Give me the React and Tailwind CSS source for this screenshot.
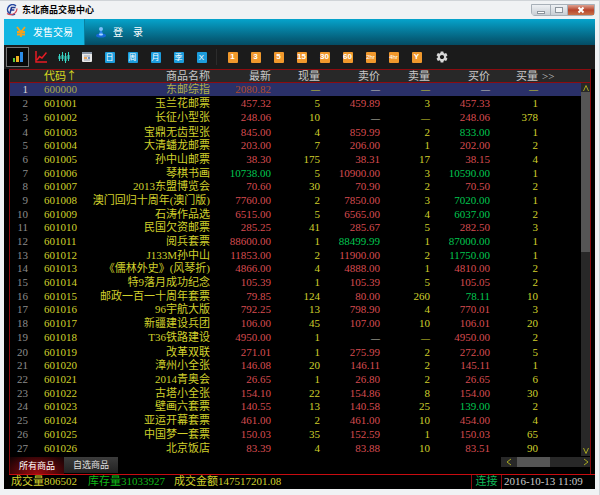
import { clsx } from 'clsx';
import { MdSettings } from 'react-icons/md';

const rows = [
  ['600000', '东邮综指', '2080.82', '—', '—', '—', '—', '—'],
  ['601001', '玉兰花邮票', '457.32', '5', '459.89', '3', '457.33', '1'],
  ['601002', '长征小型张', '248.06', '10', '—', '—', '248.06', '378'],
  ['601003', '宝鼎无齿型张', '845.00', '4', '859.99', '2', '833.00', '1'],
  ['601004', '大清蟠龙邮票', '203.00', '7', '206.00', '1', '202.00', '2'],
  ['601005', '孙中山邮票', '38.30', '175', '38.31', '17', '38.15', '4'],
  ['601006', '琴棋书画', '10738.00', '5', '10900.00', '3', '10590.00', '1'],
  ['601007', '2013东盟博览会', '70.60', '30', '70.90', '2', '70.50', '2'],
  ['601008', '澳门回归十周年(澳门版)', '7760.00', '2', '7850.00', '3', '7020.00', '1'],
  ['601009', '石涛作品选', '6515.00', '5', '6565.00', '4', '6037.00', '2'],
  ['601010', '民国欠资邮票', '285.25', '41', '285.67', '5', '282.50', '3'],
  ['601011', '阅兵套票', '88600.00', '1', '88499.99', '1', '87000.00', '1'],
  ['601012', 'J133M孙中山', '11853.00', '2', '11900.00', '2', '11750.00', '1'],
  ['601013', '《儒林外史》(风琴折)', '4866.00', '4', '4888.00', '1', '4810.00', '2'],
  ['601014', '特9落月成功纪念', '105.39', '1', '105.39', '5', '105.05', '2'],
  ['601015', '邮政一百一十周年套票', '79.85', '124', '80.00', '260', '78.11', '10'],
  ['601016', '96宇航大版', '792.25', '13', '798.90', '4', '770.01', '3'],
  ['601017', '新疆建设兵团', '106.00', '45', '107.00', '10', '106.01', '20'],
  ['601018', 'T36铁路建设', '4950.00', '1', '—', '—', '4950.00', '2'],
  ['601019', '改革双联', '271.01', '1', '275.99', '2', '272.00', '5'],
  ['601020', '漳州小全张', '146.08', '20', '146.11', '2', '145.11', '1'],
  ['601021', '2014青奥会', '26.65', '1', '26.80', '2', '26.65', '6'],
  ['601022', '古塔小全张', '154.10', '22', '154.86', '8', '154.00', '30'],
  ['601023', '壁画六套票', '140.55', '13', '140.58', '25', '139.00', '2'],
  ['601024', '亚运开幕套票', '461.00', '2', '461.00', '10', '454.00', '4'],
  ['601025', '中国梦一套票', '150.03', '35', '152.59', '1', '150.03', '65'],
  ['601026', '北京饭店', '83.39', '4', '83.88', '10', '83.51', '90'],
];

// prices below the previous close are shown in green
const falling = ['10738.00', '833.00', '10590.00', '7020.00', '6037.00', '88499.99', '87000.00', '11750.00', '78.11', '139.00'];

const periods = ['日', '周', '月', '季', 'X'];
const minutes = ['1', '3', '5', '15', '30', '60', '2hr', '4hr', 'Y'];

const priceColor = (value, first) => {
  if (value === '—') return 'text-[#c8c8b8]';
  if (first) return 'text-[#b04c2c]';
  return falling.includes(value) ? 'text-[#00c850]' : 'text-[#d84c50]';
};

const Logo = () => (
  <svg viewBox="0 0 12 12" className="h-3 w-3" aria-hidden="true">
    <path d="M10 2A5 5 0 1 0 9 10" fill="none" stroke="#2446a0" strokeWidth="1.5" />
    <path d="M1 9.5C5 12 10.500 10 11 4.500" fill="none" stroke="#d04858" strokeWidth="1.200" />
    <path d="M4 9 5.500 3.500H9.500M4.800 6H8.300" fill="none" stroke="#203a90" strokeWidth="1.600" />
  </svg>
);

const YenIcon = () => (
  <svg viewBox="0 0 12 12" className="h-3 w-3" aria-hidden="true">
    <path d="M2 1 6 6 10 1M2 6H10M2 8.500H10M6 6V11" fill="none" stroke="#f5a21c" strokeWidth="1.800" />
  </svg>
);

const UserIcon = () => (
  <svg viewBox="0 0 12 12" className="h-3 w-3" aria-hidden="true">
    <ellipse cx="6" cy="9.500" rx="5" ry="2" fill="#1668d8" />
    <path d="M6 3 3.500 9Q6 10.500 8.500 9Z" fill="#2c86f0" />
    <circle cx="6" cy="3" r="2" fill="#7cc0fa" />
    <ellipse cx="6" cy="8.500" rx="2" ry="1" fill="#a8d8ff" />
  </svg>
);

const BarsIcon = () => (
  <svg viewBox="0 0 12 12" className="h-3 w-3 shrink-0" aria-hidden="true">
    <rect x="1" y="7" width="2" height="4" fill="#58c838" />
    <rect x="4" y="5" width="3" height="6" fill="#f0b020" />
    <rect x="8" y="1" width="3" height="10" fill="#2c8ce8" />
  </svg>
);

const LineIcon = () => (
  <svg viewBox="0 0 12 12" className="h-3 w-3 shrink-0" aria-hidden="true">
    <path d="M1 0V11H12M2 9 4.500 5.500 7 7 11.500 1.500" fill="none" stroke="#e81c24" strokeWidth="1.500" />
  </svg>
);

const CandlesIcon = () => (
  <svg viewBox="0 0 12 12" className="h-3 w-3 shrink-0" aria-hidden="true">
    <path d="M1.500 3V10M4.500 1V10M7.500 2V12M10.500 1V10" stroke="#38d8c8" strokeWidth="1" />
    <path d="M1.500 5V8M4.500 4V8M7.500 5V10M10.500 4V8" stroke="#38d8c8" strokeWidth="2" />
  </svg>
);

const CalendarIcon = () => (
  <svg viewBox="0 0 12 12" className="h-3 w-3 shrink-0" aria-hidden="true">
    <rect x="1" y="1" width="10" height="10" rx="1" fill="#e8e8e8" />
    <rect x="1" y="1" width="10" height="2" fill="#8c98a8" />
    <path d="M3 5H9M3 9H9" stroke="#98a0b0" />
    <path d="M3 7H6" stroke="#e89030" strokeWidth="1.500" />
    <path d="M7 7H9" stroke="#4878b8" strokeWidth="1.500" />
  </svg>
);

const ToolButton = ({ label, active, children }) => (
  <button
    aria-label={label}
    className={clsx(
      'flex h-5 w-[23px] shrink-0 items-center justify-center border',
      active ? 'border-[#777777] bg-[#080808]' : 'border-transparent'
    )}
  >
    {children}
  </button>
);

const TitleBar = () => (
  <header className="flex h-[18px] shrink-0 items-start justify-between">
    <h1 className="flex items-center gap-1 pt-0.5 pl-0.5 text-[9px] leading-[14px] font-bold text-black">
      <Logo />
      东北商品交易中心
    </h1>
    <div className="mt-[3px] flex h-3 rounded-b-sm border border-[#a8b0b8] bg-[#a8b0b8]">
      <button aria-label="最小化" className="flex w-[18px] items-center justify-center bg-linear-to-b from-[#eef1f4] to-[#c8ced4]">
        <span className="mt-1 h-[3px] w-2 border border-[#8c949c] bg-white" />
      </button>
      <button aria-label="最大化" className="ml-px flex w-4 items-center justify-center bg-linear-to-b from-[#eef1f4] to-[#c8ced4]">
        <span className="h-1.5 w-2 border border-[#8c949c] bg-[#f4f6f8]" />
      </button>
      <button aria-label="关闭" className="ml-px flex w-[26px] items-center justify-center bg-linear-to-b from-[#dca090] via-[#b8442c] to-[#c87048]">
        <svg viewBox="0 0 8 8" className="h-2 w-2">
          <path d="M1.500 1.500 6.500 6.500M6.500 1.500 1.500 6.500" stroke="#ffffff" strokeWidth="2" />
        </svg>
      </button>
    </div>
  </header>
);

const Toolbar = () => (
  <div className="flex h-6 shrink-0 items-center bg-[#1b1b1b] pl-0.5 font-['Liberation_Sans','Noto_Sans_CJK_SC',sans-serif]">
    <ToolButton label="行情" active><BarsIcon /></ToolButton>
    <ToolButton label="分时"><LineIcon /></ToolButton>
    <ToolButton label="K线"><CandlesIcon /></ToolButton>
    <ToolButton label="日历"><CalendarIcon /></ToolButton>
    {periods.map((p) => (
      <ToolButton key={p} label={p}>
        <span className="flex h-[11px] w-2.5 shrink-0 items-center justify-center rounded-[1px] bg-[#1c9cdc] text-[8px] leading-[11px] text-white">{p}</span>
      </ToolButton>
    ))}
    <div className="mr-1 ml-[3px] h-4 w-px bg-[#2c2c2c]" />
    {minutes.map((m) => (
      <ToolButton key={m} label={m}>
        <span
          className={clsx(
            'flex h-[11px] w-2.5 shrink-0 items-center justify-center rounded-[1px] bg-[#f0982c] text-white',
            m.length > 2 ? 'text-[6px]' : 'text-[8px] font-bold'
          )}
        >
          {m}
        </span>
      </ToolButton>
    ))}
    <div className="w-0.5" />
    <ToolButton label="设置">
      <MdSettings className="h-3.5 w-3.5 shrink-0 text-[#d8d8d8]" />
    </ToolButton>
  </div>
);

const Cell = ({ value, className }) => (
  <td className={className}>{value === '—' ? <span className="text-[9px]">—</span> : value}</td>
);

const QuoteTable = () => (
  <table className="h-full w-full table-fixed border-separate border-spacing-0 text-right text-[11px] leading-[11px] whitespace-nowrap">
    <colgroup>
      <col className="w-[18px]" />
      <col className="w-[60px]" />
      <col className="w-[122px]" />
      <col className="w-[61px]" />
      <col className="w-[49px]" />
      <col className="w-[60px]" />
      <col className="w-[50px]" />
      <col className="w-[60px]" />
      <col className="w-12" />
      <col />
    </colgroup>
    <thead>
      <tr className="h-[13px] bg-[#282828] text-[#c8c8c8] [&>th]:border-b [&>th]:border-[#8c0c10] [&>th]:p-0 [&>th]:font-normal">
        <th />
        <th className="text-left text-[#d8d820]"><span className="pl-4">代码<span className="font-['Noto_Sans_CJK_SC',sans-serif]">↑</span></span></th>
        <th>商品名称</th>
        <th>最新</th>
        <th>现量</th>
        <th>卖价</th>
        <th>卖量</th>
        <th>买价</th>
        <th>买量</th>
        <th className="text-left"><span className="pl-1">&gt;&gt;</span></th>
      </tr>
    </thead>
    <tbody>
      {rows.map(([code, name, last, vol, ask, askVol, bid, bidVol], i) => (
        <tr
          key={code}
          className={clsx(
            'text-[#d0d02c] [&>td]:border-b-2 [&>td]:border-black [&>td]:bg-clip-padding [&>td]:p-0',
            i === 0 && '[&>td]:bg-[#2a3068]'
          )}
        >
          <td className={i === 0 ? 'text-[#d8d8d8]' : 'text-[#8c8c8c]'}>{i + 1}</td>
          <td className={clsx('text-left', i === 0 && 'text-[#a8a848]')}><span className="pl-4">{code}</span></td>
          <td className={clsx(i === 0 && 'text-[#b0b048]')}>{name}</td>
          <Cell value={last} className={priceColor(last, i === 0)} />
          <Cell value={vol} />
          <Cell value={ask} className={priceColor(ask)} />
          <Cell value={askVol} />
          <Cell value={bid} className={priceColor(bid)} />
          <Cell value={bidVol} />
          <td />
        </tr>
      ))}
    </tbody>
  </table>
);

const Chevron = ({ d }) => (
  <svg viewBox="0 0 8 8" className="h-2 w-2">
    <path d={d} fill="none" stroke="#a8a820" strokeWidth="1" />
  </svg>
);

const VerticalScroll = () => (
  <div className="flex w-[9px] shrink-0 flex-col">
    <div className="h-[13px] shrink-0 border-b border-[#8c0c10] bg-[#282828]" />
    <div className="flex flex-1 flex-col items-center bg-[#282828]">
      <button aria-label="向上" className="h-[9px]"><Chevron d="M1.500 7 4 1.500 6.500 7" /></button>
      <div className="h-[43%] w-full bg-[#555555]" />
      <div className="flex-1" />
      <button aria-label="向下" className="h-2.5"><Chevron d="M1.500 1 4 6.500 6.500 1" /></button>
    </div>
  </div>
);

const BottomTabs = () => (
  <div className="flex h-[18px] shrink-0 justify-between pt-px">
    <div className="flex text-[9px] leading-[14px] text-white">
      <button className="w-[54px] bg-radial-[at_50%_100%] from-[#a00c10] to-[#100204]">所有商品</button>
      <button className="mb-px w-[54px] bg-linear-to-b from-[#3c3c3c] to-[#222222] text-[#e0e0e0]">自选商品</button>
    </div>
    <div className="flex h-2.5 w-[89px] items-center bg-[#282828]">
      <button aria-label="向左" className="mr-1 ml-1 h-2"><Chevron d="M6 1 2 4 6 7" /></button>
      <div className="h-full w-[33px] bg-[#555555]" />
      <div className="flex-1" />
      <button aria-label="向右" className="h-2"><Chevron d="M2 1 6 4 2 7" /></button>
    </div>
  </div>
);

const StatusBar = () => (
  <footer className="ml-[5px] flex h-[15px] shrink-0 border-t border-[#c80c10] text-[11px] leading-[13px] text-[#d0d02c]">
    <span className="w-[77px] shrink-0 pl-0.5">成交量806502</span>
    <span className="w-[86px] shrink-0 pl-0.5 text-[#10b818]">库存量31033927</span>
    <span className="flex-1 pl-0.5">成交金额147517201.08</span>
    <span className="w-[30px] border-l border-[#8c0c10] text-center text-[#10b858]">连接</span>
    <time className="w-[94px] border-l border-[#8c0c10] pl-0.5 text-[#c8c8c8]">2016-10-13 11:09</time>
  </footer>
);

export default function App() {
  return (
    <div className="flex h-screen flex-col border-t border-r border-[#d0d4d8] bg-[#f0f2f4] pr-1 pb-1.5 pl-1 font-['Liberation_Serif','Noto_Sans_CJK_SC',serif]">
      <TitleBar />
      <nav className="flex h-[26px] shrink-0 bg-linear-to-b from-[#06a4cc] to-[#044c64] text-[10px] text-white">
        <button className="flex w-20 items-center justify-center gap-1.5 bg-[#12b6e2]">
          <YenIcon />
          发售交易
        </button>
        <button className="flex items-center gap-1.5 border-l border-[#0880a0] pl-2.5">
          <UserIcon />
          <span className="whitespace-pre">登　录</span>
        </button>
      </nav>
      <Toolbar />
      <main className="flex min-h-0 flex-1 flex-col bg-black">
        <div className="mr-1 ml-[5px] flex min-h-0 flex-1 flex-col border-t border-r border-l border-[#8c0c10]">
          <div className="flex min-h-0 flex-1">
            <div className="min-h-0 min-w-0 flex-1">
              <QuoteTable />
            </div>
            <VerticalScroll />
          </div>
          <BottomTabs />
        </div>
        <StatusBar />
      </main>
    </div>
  );
}
